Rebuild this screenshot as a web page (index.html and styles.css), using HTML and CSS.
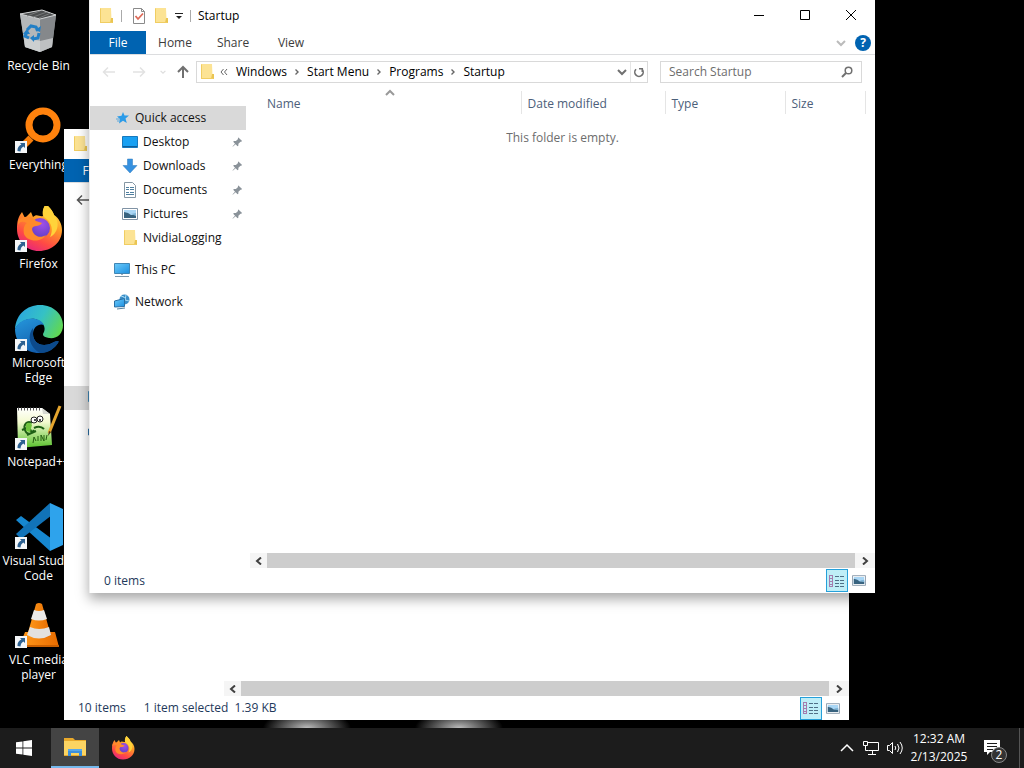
FILE: index.html
```html
<!DOCTYPE html>
<html lang="en">
<head>
    <meta charset="UTF-8">
    <meta name="viewport" content="width=device-width, initial-scale=1.0">
    <title>Desktop</title>
    <link rel="stylesheet" href="styles.css">
</head>
<body>

    <!-- Shared icons -->
    <svg class="sprite" aria-hidden="true">
        <defs>
            <linearGradient id="g-fox" x1="0.8" y1="0" x2="0.3" y2="1">
                <stop offset="0" stop-color="#fff04a"/>
                <stop offset="0.4" stop-color="#ff9a26"/>
                <stop offset="0.75" stop-color="#ff4a45"/>
                <stop offset="1" stop-color="#e6267c"/>
            </linearGradient>
            <radialGradient id="g-globe" cx="0.6" cy="0.3" r="0.8">
                <stop offset="0" stop-color="#a050e8"/>
                <stop offset="1" stop-color="#5b3cc4"/>
            </radialGradient>
            <linearGradient id="g-edge-top" x1="0" y1="0.3" x2="1" y2="0.7">
                <stop offset="0" stop-color="#2ba6e0"/>
                <stop offset="0.5" stop-color="#35c1c5"/>
                <stop offset="1" stop-color="#62d84e"/>
            </linearGradient>
            <linearGradient id="g-edge-low" x1="0" y1="0" x2="0.6" y2="1">
                <stop offset="0" stop-color="#2597dc"/>
                <stop offset="1" stop-color="#1159a8"/>
            </linearGradient>
            <linearGradient id="g-note" x1="0" y1="0" x2="0" y2="1">
                <stop offset="0" stop-color="#ffffff"/>
                <stop offset="0.35" stop-color="#f4fad0"/>
                <stop offset="1" stop-color="#58c02c"/>
            </linearGradient>
            <linearGradient id="g-cone" x1="0" y1="0" x2="1" y2="0">
                <stop offset="0" stop-color="#ff9a1c"/>
                <stop offset="1" stop-color="#e86c00"/>
            </linearGradient>
            <linearGradient id="g-blue" x1="0" y1="0" x2="1" y2="1">
                <stop offset="0" stop-color="#6ccbfa"/>
                <stop offset="1" stop-color="#1c8fe0"/>
            </linearGradient>
        </defs>

        <symbol id="i-folder" viewBox="0 0 16 16">
            <path d="M2 0h11v11h2v4H2z" fill="#f3d266"/>
            <path d="M2 0h11l.6 14H3z" fill="#fce394"/>
            <path d="M13 10h2v5h-3z" fill="#eac552"/>
            <path d="M2.500.500v14h12" fill="none" stroke="#f0cd62"/>
        </symbol>
        <symbol id="i-shortcut" viewBox="0 0 12 12">
            <path d="M0 0h12v12H0z" fill="#f4f6f8"/>
            <path d="M5 2h5v5L8.400 5.400C6.500 6.500 5.600 8 5.500 10.500L2.500 10C2.300 7 3.800 4.800 6.400 3.600z" fill="#2d6191"/>
        </symbol>
        <symbol id="i-firefox" viewBox="0 0 48 48">
            <path d="M31 0C35 4 38 7 39 11C44 14 47 20 47 26C47 38 37 47 24 47C11 47 2 37 2 25C2 18 3 13 7 8L10 14L16 8L18 13C22 9 24 13 28 12C27 8 28 4 31 0z" fill="url(#g-fox)"/>
            <circle cx="25" cy="24" r="10" fill="url(#g-globe)"/>
            <path d="M3 17C8 11 17 12 21 17L27 19C24 24 18 20 17 25C18 32 25 35 31 31C26 39 12 38 9 30C8 25 9 21 12 19C8 17 5 17 3 21z" fill="#ff8a2b"/>
            <path d="M31 0C35 4 38 7 39 11C46 19 42 30 35 33C39 25 36 17 29 13C27 9 28 4 31 0z" fill="#ffd33a"/>
        </symbol>
        <symbol id="i-details" viewBox="0 0 18 14">
            <path d="M1.500 1v12M4.500 1v12M1 1.500h4M1 4.500h4M1 7.500h4M1 10.500h4M1 12.500h4" stroke="#a47cae" stroke-width="1" fill="none"/>
            <path d="M7 2.500h4M12 2.500h4M7 6.500h4M12 6.500h4M7 9.500h4M12 9.500h4M7 12.500h4M12 12.500h4" stroke="#4f6f86" fill="none"/>
        </symbol>
        <symbol id="i-picture" viewBox="0 0 16 12">
            <path d="M.5.500h15v11H.5z" fill="#fff" stroke="#8093a5"/>
            <path d="M2 2h12v8H2z" fill="#a9d6f5"/>
            <path d="M2 4l4 1 3 2h5v3H2z" fill="#38637f"/>
            <path d="M9 6l5-1v3z" fill="#7fb4d6"/>
        </symbol>
        <symbol id="i-pin" viewBox="0 0 12 12">
            <path d="M7 1l4 4-1 .8-.7-.2L7 8l-.1 2-.9.700L4 8.500.800 11.300.700 10.500 3.300 7.800 1.300 5.800l.8-.8 2.200-.1L6.600 2.600 6.400 1.700z" fill="#8a9299"/>
        </symbol>
        <symbol id="i-monitor" viewBox="0 0 16 16">
            <path d="M.5 1.500h15v10H.5z" fill="url(#g-blue)" stroke="#3f86b5"/>
            <path d="M1 14.500h14" stroke="#7f97a8"/>
            <path d="M7 12h2v1H7z" fill="#9ab"/>
        </symbol>
        <symbol id="i-network" viewBox="0 0 16 16">
            <circle cx="10.500" cy="5.500" r="5" fill="#3b8fc9"/>
            <path d="M7 2l3 1 1 3 4 1M8 8l3-2 1-5" stroke="#a8dcf5" fill="none"/>
            <path d="M.5 7l10-2.500v8L.5 13z" fill="url(#g-blue)" stroke="#2a6fa3"/>
            <path d="M3 15l8-1" stroke="#55809d"/>
        </symbol>
        <symbol id="i-left" viewBox="0 0 14 12">
            <path d="M13 6H2M6 1.500L1.500 6L6 10.500" fill="none" stroke="currentColor" stroke-width="1.500"/>
        </symbol>
        <symbol id="i-chev" viewBox="0 0 10 10">
            <path d="M1 3l4 4 4-4" fill="none" stroke="currentColor" stroke-width="2"/>
        </symbol>
        <symbol id="i-scroll" viewBox="0 0 8 8">
            <path d="M6 .5L2 4l4 3.500" fill="none" stroke="#404040" stroke-width="2"/>
        </symbol>
    </svg>

    <main class="desktop">

        <!-- Desktop shortcuts -->
        <div class="shortcuts">
            <a class="shortcut" href="#">
                <svg viewBox="0 0 48 48">
                    <path d="M5 6L27 2L41 7L37 39L25 44L10 39z" fill="#8f9294"/>
                    <path d="M5 6l20 5v33l-15-5z" fill="#b4b7b9"/>
                    <path d="M25 11l16-4-4 32-12 5z" fill="#85888b"/>
                    <path d="M5 6L27 2l14 5-16 4z" fill="#4b4d4e" stroke="#d2d4d5"/>
                    <path d="M12 8l13-5M18 9l14-5M24 10l12-5" stroke="#77797a"/>
                    <path d="M9 30l16 3 13-3-1 9-12 5-15-5z" fill="#d6d8da" opacity="0.7"/>
                    <path d="M12 22l4-4 5 1 2 4M24 25l-1 5-5 1M14 30l-4-2 2-4" fill="none" stroke="#237fc5" stroke-width="3"/>
                    <path d="M20 22l5 2 1-6zM19 27v7l-4-4zM8 26l4-5 3 5z" fill="#237fc5"/>
                </svg>
                <span>Recycle Bin</span>
            </a>
            <a class="shortcut" href="#">
                <svg viewBox="0 0 48 48">
                    <path d="M16 31L5 42" stroke="#f57c0a" stroke-width="7"/>
                    <circle cx="28" cy="18" r="14" fill="none" stroke="#ff820d" stroke-width="7"/>
                    <use href="#i-shortcut" x="0" y="34" width="12" height="12"/>
                </svg>
                <span>Everything</span>
            </a>
            <a class="shortcut" href="#">
                <svg viewBox="0 0 48 48">
                    <use href="#i-firefox" y="-2" width="48" height="48"/>
                    <use href="#i-shortcut" x="0" y="34" width="12" height="12"/>
                </svg>
                <span>Firefox</span>
            </a>
            <a class="shortcut" href="#">
                <svg viewBox="0 0 48 48">
                    <path d="M0 24C1 9 12 0 25 0C39 0 48 10 48 20C48 29 42 34 34 33C28 32 27 30 29 27C31 22 28 16 20 14C12 13 4 17 0 24z" fill="url(#g-edge-top)"/>
                    <path d="M0 24C5 12 24 10 29 20C24 18 18 22 18 29C18 38 27 43 37 38C41 36 45 35 43 38C38 45 31 48 24 48C11 48 0 38 0 24z" fill="url(#g-edge-low)"/>
                    <path d="M18 23C12 30 14 42 25 48C34 48 40 43 43 38C45 35 41 36 37 38C27 43 18 38 18 29z" fill="#0c4a8c"/>
                    <use href="#i-shortcut" x="0" y="34" width="12" height="12"/>
                </svg>
                <span>Microsoft Edge</span>
            </a>
            <a class="shortcut" href="#">
                <svg viewBox="0 0 48 48">
                    <path d="M2 4h25l8 6 2 31-34 3z" fill="url(#g-note)"/>
                    <path d="M27 4l1 6h7z" fill="#d5d8d0"/>
                    <path d="M3 5h23" stroke="#555" stroke-width="3" stroke-dasharray="1 2"/>
                    <path d="M17 19C12 16 8 21 10 26C12 32 17 30 19 26M7 26l7-3 3 6M12 31l9-4M19 24q6-3 10 1" fill="none" stroke="#1e5f14" stroke-width="2"/>
                    <path d="M11 20q4-3 6 1l-2 7-4-1z" fill="#6fc43c"/>
                    <circle cx="19" cy="16" r="3" fill="#fff" stroke="#222"/>
                    <circle cx="25" cy="15" r="3" fill="#fff" stroke="#222"/>
                    <circle cx="20" cy="16" r="1" fill="#111"/>
                    <circle cx="25" cy="16" r="1" fill="#111"/>
                    <path d="M18 39l1-6 2 4M23 37v-5M26 37v-6l3 6v-6M31 36l1-5" fill="none" stroke="#265f12"/>
                    <path d="M45 2L34 29" stroke="#e5a52e" stroke-width="3"/>
                    <path d="M34 27l-1 5 3-4z" fill="#4b3318"/>
                    <use href="#i-shortcut" x="0" y="34" width="12" height="12"/>
                </svg>
                <span>Notepad++</span>
            </a>
            <a class="shortcut" href="#">
                <svg viewBox="0 0 48 48">
                    <path d="M1 17l5-4 31 23-2 12z" fill="#1687d0"/>
                    <path d="M1 31l5 5 31-24L35 0z" fill="#1173b8"/>
                    <path d="M35 0l13 6v36l-13 6z" fill="#2ea3ec"/>
                    <use href="#i-shortcut" x="0" y="34" width="12" height="12"/>
                </svg>
                <span>Visual Studio Code</span>
            </a>
            <a class="shortcut" href="#">
                <svg viewBox="0 0 48 48">
                    <path d="M10 30h30l4 15H4z" fill="url(#g-cone)"/>
                    <path d="M4 43h40v2H4z" fill="#c95f00"/>
                    <path d="M21 2Q24 0 27 2L36 34Q24 41 12 34z" fill="url(#g-cone)"/>
                    <path d="M19 8q5 2 10 0l3 9q-8 3-16 0z" fill="#eceae8"/>
                    <path d="M15 25q9 4 19 0l2 8q-12 7-24 0z" fill="#e3e1df"/>
                    <use href="#i-shortcut" x="0" y="34" width="12" height="12"/>
                </svg>
                <span>VLC media player</span>
            </a>
        </div>

        <!-- Background window -->
        <section class="window window-back" aria-label="File Explorer">
            <header class="titlebar">
                <svg class="ico16"><use href="#i-folder"/></svg>
            </header>
            <nav class="tabs">
                <button class="tab file">File</button>
            </nav>
            <div class="toolbar">
                <button class="nav-btn on" aria-label="Back"><svg class="arrow"><use href="#i-left"/></svg></button>
            </div>
            <div class="content">
                <ul class="tree tree-low">
                    <li class="root selected"><svg class="ico16"><use href="#i-monitor"/></svg></li>
                    <li class="root gap"><svg class="ico16"><use href="#i-network"/></svg></li>
                </ul>
                <div class="files">
                    <div class="list"></div>
                    <div class="scrollbar">
                        <button aria-label="Scroll left"><svg><use href="#i-scroll"/></svg></button>
                        <div class="thumb"></div>
                        <button class="right" aria-label="Scroll right"><svg><use href="#i-scroll"/></svg></button>
                    </div>
                </div>
            </div>
            <footer class="statusbar">
                <span>10 items</span>
                <span class="picked">1 item selected&nbsp; 1.39 KB</span>
                <button class="view active" aria-label="Details"><svg class="details"><use href="#i-details"/></svg></button>
                <button class="view" aria-label="Large icons"><svg class="thumbs"><use href="#i-picture"/></svg></button>
            </footer>
        </section>

        <!-- Startup window -->
        <section class="window window-front" aria-label="Startup">
            <header class="titlebar">
                <svg class="ico16"><use href="#i-folder"/></svg>
                <i class="sep"></i>
                <svg class="ico16 check" viewBox="0 0 16 16">
                    <path d="M2.500.500h8l3 3v12h-11z" fill="#fff" stroke="#8a8a8a"/>
                    <path d="M10.500.500v3h3" fill="none" stroke="#8a8a8a"/>
                    <path d="M4.500 8l2.500 3 5-5.500" fill="none" stroke="#dd6a58" stroke-width="1.800"/>
                </svg>
                <svg class="ico16"><use href="#i-folder"/></svg>
                <svg class="drop" viewBox="0 0 8 8"><path d="M0 1.500h8" stroke="#222"/><path d="M1 4h6L4 7z" fill="#222"/></svg>
                <i class="sep"></i>
                <h1>Startup</h1>
                <div class="controls">
                    <button aria-label="Minimize"><svg viewBox="0 0 12 12"><path d="M1 5.500h10" stroke="#000"/></svg></button>
                    <button aria-label="Maximize"><svg viewBox="0 0 12 12"><path d="M1.500.500h9v9h-9z" fill="none" stroke="#000"/></svg></button>
                    <button aria-label="Close"><svg viewBox="0 0 12 12"><path d="M1 0l10 10M11 0L1 10" stroke="#000"/></svg></button>
                </div>
            </header>
            <nav class="tabs">
                <button class="tab file">File</button>
                <button class="tab">Home</button>
                <button class="tab">Share</button>
                <button class="tab">View</button>
                <button class="expand" aria-label="Expand the ribbon"><svg class="chev"><use href="#i-chev"/></svg></button>
                <button class="help" aria-label="Help">?</button>
            </nav>
            <div class="toolbar">
                <button class="nav-btn" aria-label="Back"><svg class="arrow"><use href="#i-left"/></svg></button>
                <button class="nav-btn" aria-label="Forward"><svg class="arrow flip"><use href="#i-left"/></svg></button>
                <button class="recent" aria-label="Recent locations"><svg class="tiny"><use href="#i-chev"/></svg></button>
                <button class="up" aria-label="Up"><svg viewBox="0 0 14 14"><path d="M7 13V2M2 7l5-5 5 5" fill="none" stroke="#707070" stroke-width="2"/></svg></button>
                <div class="address">
                    <svg class="ico16"><use href="#i-folder"/></svg>
                    <svg class="more" viewBox="0 0 8 8"><path d="M3.500 1L1 4l2.500 3M7 1L4.500 4 7 7" fill="none" stroke="#666"/></svg>
                    <a href="#">Windows</a><svg class="crumb" viewBox="0 0 8 8"><path d="M2.500 1.500L5 4 2.500 6.500" fill="none" stroke="#666" stroke-width="1.400"/></svg>
                    <a href="#">Start Menu</a><svg class="crumb" viewBox="0 0 8 8"><path d="M2.500 1.500L5 4 2.500 6.500" fill="none" stroke="#666" stroke-width="1.400"/></svg>
                    <a href="#">Programs</a><svg class="crumb" viewBox="0 0 8 8"><path d="M2.500 1.500L5 4 2.500 6.500" fill="none" stroke="#666" stroke-width="1.400"/></svg>
                    <a href="#">Startup</a>
                    <button class="history" aria-label="Previous locations"><svg class="chev"><use href="#i-chev"/></svg></button>
                    <button class="refresh" aria-label="Refresh"><svg viewBox="0 0 12 12"><path d="M3 3.200A4.200 4.200 0 1 0 9 3.200M9.300 6V2.500M6 2.700h4" fill="none" stroke="#707070" stroke-width="1.600"/></svg></button>
                </div>
                <div class="search">
                    <input type="text" placeholder="Search Startup" aria-label="Search Startup">
                    <svg viewBox="0 0 12 12"><circle cx="7.500" cy="4.500" r="3.300" fill="none" stroke="#707070" stroke-width="1.500"/><path d="M5 7L1 11" stroke="#707070" stroke-width="2"/></svg>
                </div>
            </div>
            <div class="content">
                <ul class="tree">
                    <li class="root selected">
                        <svg class="ico16" viewBox="0 0 16 16"><path d="M9 2l1.500 3.500H15l-3.500 3 1.300 4.500L9 10.800 5 13.500l1-4.500L3 6.500l4.500-.700z" fill="#2b9be8"/><path d="M2 9h4M3 11h3" stroke="#5da9dc"/></svg>
                        Quick access
                    </li>
                    <li>
                        <svg class="ico16" viewBox="0 0 16 16"><path d="M.5 2.500h15v11H.5z" fill="#18a0f2" stroke="#1779bd"/><path d="M1 12.500h14" stroke="#0e5e9a"/></svg>
                        Desktop
                        <svg class="pin"><use href="#i-pin"/></svg>
                    </li>
                    <li>
                        <svg class="ico16" viewBox="0 0 16 16"><path d="M5.500 1h5v6.500H15L8 15 1 7.500h4.500z" fill="#3691e0" stroke="#2a78bd" stroke-width="0.500"/></svg>
                        Downloads
                        <svg class="pin"><use href="#i-pin"/></svg>
                    </li>
                    <li>
                        <svg class="ico16" viewBox="0 0 16 16"><path d="M2.500.500h8l3 3v12h-11z" fill="#fff" stroke="#8596a3"/><path d="M4 5.500h3M8 5.500h4M4 7.500h3M8 7.500h4M4 10.500h3M8 10.500h4M4 12.500h8" stroke="#4f7f9f"/></svg>
                        Documents
                        <svg class="pin"><use href="#i-pin"/></svg>
                    </li>
                    <li>
                        <svg class="ico16"><use href="#i-picture"/></svg>
                        Pictures
                        <svg class="pin"><use href="#i-pin"/></svg>
                    </li>
                    <li>
                        <svg class="ico16"><use href="#i-folder"/></svg>
                        NvidiaLogging
                    </li>
                    <li class="root gap"><svg class="ico16"><use href="#i-monitor"/></svg>This PC</li>
                    <li class="root gap"><svg class="ico16"><use href="#i-network"/></svg>Network</li>
                </ul>
                <div class="files">
                    <div class="list">
                        <table>
                            <thead>
                                <tr>
                                    <th class="name">Name<svg class="sort"><use href="#i-chev"/></svg></th>
                                    <th class="date">Date modified</th>
                                    <th class="type">Type</th>
                                    <th class="size">Size</th>
                                    <td></td>
                                </tr>
                            </thead>
                        </table>
                        <p class="empty">This folder is empty.</p>
                    </div>
                    <div class="scrollbar">
                        <button aria-label="Scroll left"><svg><use href="#i-scroll"/></svg></button>
                        <div class="thumb"></div>
                        <button class="right" aria-label="Scroll right"><svg><use href="#i-scroll"/></svg></button>
                    </div>
                </div>
            </div>
            <footer class="statusbar">
                <span>0 items</span>
                <button class="view active" aria-label="Details"><svg class="details"><use href="#i-details"/></svg></button>
                <button class="view" aria-label="Large icons"><svg class="thumbs"><use href="#i-picture"/></svg></button>
            </footer>
        </section>
    </main>

    <!-- Taskbar -->
    <footer class="taskbar">
        <button class="start" aria-label="Start">
            <svg viewBox="0 0 16 16"><path d="M0 2.300L6.500 1.400V7.600H0zM7.300 1.300L16 0V7.600H7.300zM0 8.400H6.500V14.600L0 13.700zM7.300 8.400H16V16L7.300 14.700z" fill="#fff"/></svg>
        </button>
        <button class="task running" aria-label="File Explorer">
            <svg viewBox="0 0 24 24">
                <path d="M1 3h9l2 2h11v16H1z" fill="#e9a92b"/>
                <path d="M1 6h22v14H1z" fill="#fcd462"/>
                <path d="M5 14h14v7h-3v-3H8v3H5z" fill="#3d8fdc"/>
                <path d="M5 14h14v2H5z" fill="#58a8ea"/>
            </svg>
        </button>
        <button class="task" aria-label="Firefox"><svg><use href="#i-firefox"/></svg></button>
        <div class="tray">
            <button aria-label="Show hidden icons"><svg viewBox="0 0 16 16"><path d="M2 11l6-6 6 6" fill="none" stroke="#fff" stroke-width="1.500"/></svg></button>
            <button aria-label="Network"><svg viewBox="0 0 16 16"><path d="M4.500 2.500h11v8h-10M.5 1.500h4v4h-4zM2.500 6v4.500h3M9.500 11v3M5 14.500h8" fill="none" stroke="#fff"/></svg></button>
            <button aria-label="Volume"><svg viewBox="0 0 16 16"><path d="M.5 5.500h2l3-3v11l-3-3h-2zM8 6q1.500 2 0 4M10.500 4q3 4 0 8M13 2q4.500 6 0 12" fill="none" stroke="#fff"/></svg></button>
            <button class="clock"><span>12:32 AM</span><span>2/13/2025</span></button>
            <button class="notify" aria-label="Notifications">
                <svg viewBox="0 0 16 16"><path d="M0 0h16v12H6l-3 3v-3H0z" fill="#fff"/><path d="M3 3.500h10M3 6.500h10M3 9.500h6" stroke="#1c1c1c"/></svg>
                <b>2</b>
            </button>
            <button class="peek" aria-label="Show desktop"></button>
        </div>
    </footer>

</body>
</html>
```
FILE: styles.css
```css
* {
    box-sizing: border-box;
}

html, body {
    margin: 0;
    height: 100%;
    overflow: hidden;
    background: #000;
}

body {
    display: flex;
    flex-direction: column;
    font-family: "Open Sans", "Noto Sans", sans-serif;
    font-size: 12px;
    line-height: 16px;
    color: #1a1a1a;
}

button, input {
    font: inherit;
    color: inherit;
    background: none;
    border: 0;
    padding: 0;
    margin: 0;
}

button {
    display: flex;
    align-items: center;
    justify-content: center;
}

a {
    color: inherit;
    text-decoration: none;
}

svg {
    display: block;
    flex: none;
}

.sprite {
    position: absolute;
    width: 0;
    height: 0;
}

.ico16 {
    width: 16px;
    height: 16px;
}

/* Desktop */
.desktop {
    position: relative;
    flex: 1;
    min-height: 0;
    background:
        radial-gradient(44px 18px at 307px 100%, #bbb, transparent),
        radial-gradient(44px 18px at 459px 100%, #bbb, transparent),
        #000;
}

.shortcuts {
    display: flex;
    flex-direction: column;
    width: 77px;
}

.shortcut {
    display: flex;
    flex-direction: column;
    align-items: center;
    gap: 2px;
    height: 99px;
    padding-top: 8px;
    color: #fff;
    line-height: 15px;
    text-align: center;
}

.shortcut svg {
    width: 48px;
    height: 48px;
}

/* Windows */
.window {
    position: absolute;
    display: flex;
    flex-direction: column;
    background: #fff;
}

.window-back {
    left: 64px;
    top: 129px;
    width: 785px;
    height: 591px;
}

.window-front {
    left: 89px;
    top: 0;
    width: 786px;
    height: 593px;
    border-left: 1px solid #eee;
    box-shadow: 0 6px 12px rgba(0, 0, 0, 0.35);
}

.titlebar {
    display: flex;
    align-items: center;
    height: 31px;
    padding-left: 8px;
}

.window-back .titlebar {
    height: 30px;
}

.titlebar .sep {
    width: 1px;
    height: 12px;
    margin: 0 7px;
    background: #aaa;
}

.titlebar .check {
    margin: 0 6px 0 2px;
}

.titlebar .drop {
    width: 8px;
    height: 8px;
    margin-left: 6px;
}

.titlebar h1 {
    margin: 0;
    font-size: 12px;
    font-weight: 400;
    color: #000;
}

.controls {
    display: flex;
    align-self: stretch;
    margin-left: auto;
    padding-right: 1px;
}

.controls button {
    width: 46px;
}

.controls svg {
    width: 12px;
    height: 12px;
}

.tabs {
    display: flex;
    align-items: center;
    height: 24px;
    padding-right: 4px;
    border-bottom: 1px solid #dcdddf;
}

.tab {
    width: 58px;
    height: 23px;
    color: #3c3c3c;
}

.tab.file {
    width: 56px;
    background: #0063b1;
    color: #fff;
}

.expand {
    width: 20px;
    margin-left: auto;
    margin-right: 4px;
    color: #bbb;
}

.chev {
    width: 10px;
    height: 10px;
}

.help {
    width: 16px;
    height: 16px;
    border-radius: 50%;
    background: #0063b1;
    color: #fff;
    font-weight: 700;
}

.toolbar {
    display: flex;
    align-items: center;
    height: 33px;
    padding: 0 13px 0 4px;
}

.nav-btn {
    width: 30px;
    color: #e2e2e2;
}

.nav-btn.on {
    color: #555;
}

.arrow {
    width: 14px;
    height: 12px;
}

.flip {
    transform: scaleX(-1);
}

.recent {
    width: 17px;
    color: #ddd;
}

.tiny {
    width: 6px;
    height: 6px;
}

.up {
    width: 25px;
    padding-right: 2px;
}

.up svg {
    width: 14px;
    height: 14px;
}

.address {
    display: flex;
    flex: 1;
    align-items: center;
    height: 22px;
    padding-left: 2px;
    border: 1px solid #d9d9d9;
    color: #000;
}

.address .more {
    width: 8px;
    height: 8px;
    margin: 0 8px 0 5px;
}

.address .crumb {
    width: 8px;
    height: 8px;
    margin: 0 6px;
}

.history {
    width: 16px;
    margin-left: auto;
    color: #707070;
}

.refresh {
    width: 17px;
    height: 20px;
    border-left: 1px solid #e5e5e5;
}

.refresh svg {
    width: 12px;
    height: 12px;
}

.search {
    display: flex;
    align-items: center;
    width: 202px;
    height: 22px;
    margin-left: 12px;
    padding: 0 8px;
    border: 1px solid #d9d9d9;
}

.search input {
    flex: 1;
    min-width: 0;
    outline: 0;
}

.search input::placeholder {
    color: #6d6d6d;
    opacity: 1;
}

.search svg {
    width: 12px;
    height: 12px;
}

.content {
    display: flex;
    flex: 1;
    min-height: 0;
}

/* Navigation tree */
.tree {
    width: 156px;
    margin: 0;
    padding: 18px 0 0;
    list-style: none;
    color: #111;
}

.tree-low {
    padding-top: 170px;
}

.tree li {
    display: flex;
    align-items: center;
    gap: 5px;
    height: 24px;
    padding: 0 3px 0 32px;
}

.tree .root {
    padding-left: 24px;
}

.tree .gap {
    margin-top: 8px;
}

.tree .selected {
    background: #d9d9d9;
}

.tree .pin {
    width: 11px;
    height: 12px;
    margin-left: auto;
}

/* File list */
.files {
    display: flex;
    flex: 1;
    flex-direction: column;
    margin-left: 4px;
}

.list {
    flex: 1;
}

table {
    width: 100%;
    margin-top: 3px;
    border-collapse: collapse;
    table-layout: fixed;
}

th {
    height: 23px;
    padding: 2px 0 0 6px;
    border-right: 1px solid #e5e5e5;
    color: #4c607a;
    font-weight: 400;
    text-align: left;
}

.name {
    position: relative;
    width: 271px;
    padding-left: 17px;
}

.date {
    width: 144px;
}

.type {
    width: 120px;
}

.size {
    width: 80px;
}

/* Sort mark sits over the middle of the column head */
.sort {
    position: absolute;
    top: -3px;
    left: 50%;
    width: 10px;
    height: 10px;
    color: #999;
    transform: scaleY(-1);
}

.empty {
    margin: 16px 0 0;
    color: #6d6d6d;
    text-align: center;
}

.scrollbar {
    display: flex;
    height: 15px;
    background: #f5f5f5;
}

.scrollbar button {
    width: 17px;
}

.scrollbar svg {
    width: 8px;
    height: 8px;
}

.scrollbar .right {
    width: 20px;
    transform: scaleX(-1);
}

.thumb {
    flex: 1;
    background: #cdcdcd;
}

.statusbar {
    display: flex;
    align-items: center;
    height: 25px;
    padding: 0 5px 0 14px;
    color: #1e395b;
}

.window-back .statusbar {
    height: 24px;
}

.statusbar .picked {
    margin-left: 18px;
}

.view {
    width: 22px;
    height: 23px;
}

.view.active {
    margin-left: auto;
    border: 1px solid #26a0da;
    background: #bfeef7;
}

.details {
    width: 18px;
    height: 14px;
}

.thumbs {
    width: 14px;
    height: 11px;
}

/* Taskbar */
.taskbar {
    display: flex;
    height: 40px;
    background: #1c1c1c;
    color: #fff;
}

.start {
    width: 48px;
    margin-right: 3px;
}

.start svg {
    width: 16px;
    height: 16px;
}

.task {
    width: 48px;
}

.task svg {
    width: 24px;
    height: 24px;
}

.task.running {
    border-bottom: 2px solid #76b9ed;
    background: #444;
}

.tray {
    display: flex;
    margin-left: auto;
}

.tray button {
    width: 24px;
}

.tray svg {
    width: 16px;
    height: 16px;
}

.tray .clock {
    flex-direction: column;
    width: 64px;
    line-height: 18px;
}

.tray .notify {
    position: relative;
    width: 41px;
}

/* Unread count over the notification icon */
.notify b {
    position: absolute;
    left: 20px;
    top: 19px;
    width: 16px;
    height: 16px;
    border: 1px solid #888;
    border-radius: 50%;
    background: #333;
    font-size: 12px;
    font-weight: 400;
    line-height: 14px;
}

.tray .peek {
    width: 5px;
    margin-left: 7px;
    border-left: 1px solid #555;
}
```
